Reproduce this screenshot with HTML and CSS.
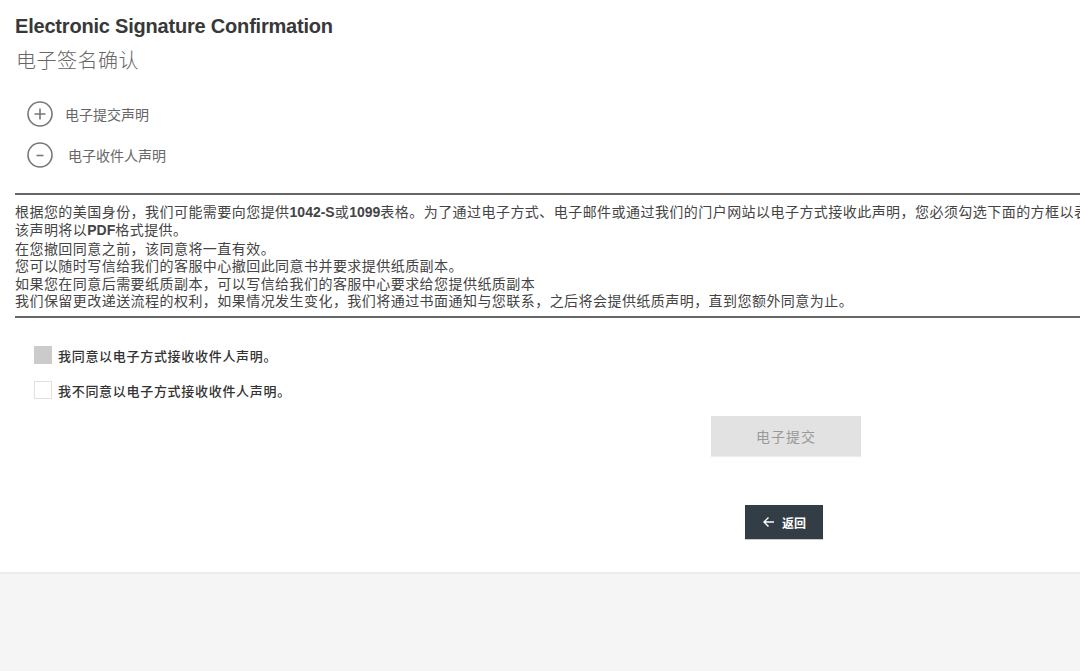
FILE: index.html
```html
<!DOCTYPE html>
<html lang="zh-CN">
<head>
  <meta charset="UTF-8" />
  <meta name="viewport" content="width=device-width, initial-scale=1.0" />
  <title>Electronic Signature Confirmation</title>
  <link rel="stylesheet" href="styles.css">
</head>
<body>
  <main class="page">
    <h1 class="title">Electronic Signature Confirmation</h1>
    <h2 class="subtitle">电子签名确认</h2>

    <div class="statements">
      <div class="statement">
        <span class="toggle">
          <svg width="26" height="26" viewBox="0 0 26 26">
            <circle cx="13" cy="13" r="12" fill="none" stroke="#777" stroke-width="1.6" />
            <path d="M13 7.5v11M7.5 13h11" stroke="#777" stroke-width="1.6" />
          </svg>
        </span>
        <span class="statement-label">电子提交声明</span>
      </div>
      <div class="statement">
        <span class="toggle">
          <svg width="26" height="26" viewBox="0 0 26 26">
            <circle cx="13" cy="13" r="12" fill="none" stroke="#777" stroke-width="1.6" />
            <path d="M9.5 13.5h7" stroke="#777" stroke-width="1.6" />
          </svg>
        </span>
        <span class="statement-label wide">电子收件人声明</span>
      </div>
    </div>

    <div class="notice">
      <p>根据您的美国身份，我们可能需要向您提供<b>1042-S</b>或<b>1099</b>表格。为了通过电子方式、电子邮件或通过我们的门户网站以电子方式接收此声明，您必须勾选下面的方框以表示同意。</p>
      <p>该声明将以<b>PDF</b>格式提供。</p>
      <p>在您撤回同意之前，该同意将一直有效。</p>
      <p>您可以随时写信给我们的客服中心撤回此同意书并要求提供纸质副本。</p>
      <p>如果您在同意后需要纸质副本，可以写信给我们的客服中心要求给您提供纸质副本</p>
      <p>我们保留更改递送流程的权利，如果情况发生变化，我们将通过书面通知与您联系，之后将会提供纸质声明，直到您额外同意为止。</p>
    </div>

    <div class="choices">
      <label class="choice">
        <span class="box box-filled"></span>
        <span>我同意以电子方式接收收件人声明。</span>
      </label>
      <label class="choice">
        <span class="box"></span>
        <span>我不同意以电子方式接收收件人声明。</span>
      </label>
    </div>

    <div class="actions">
      <button class="submit-button" disabled>电子提交</button>
      <button class="back-button">
        <svg width="13" height="12" viewBox="0 0 13 12">
          <path d="M12 6H2M6.5 1.5L2 6l4.5 4.5" fill="none" stroke="#fff" stroke-width="1.4" />
        </svg>
        返回
      </button>
    </div>
  </main>
  <footer class="footer"></footer>
</body>
</html>
```

FILE: styles.css
```css
html, body {
  margin: 0;
  padding: 0;
  height: 100%;
}
body {
  font-family: "Liberation Sans", "Noto Sans CJK SC", sans-serif;
  background: #fff;
  color: #444;
  overflow: hidden;
  display: flex;
  flex-direction: column;
}
.page {
  padding: 14px 0 32px 15px;
}
.title {
  margin: 0;
  font-size: 20px;
  line-height: 24px;
  font-weight: bold;
  color: #383838;
  letter-spacing: -0.2px;
}
.subtitle {
  margin: 8px 0 0 1px;
  font-family: "Noto Sans CJK SC", sans-serif;
  font-size: 20px;
  line-height: 28px;
  font-weight: 300;
  color: #666;
  letter-spacing: 0.5px;
}
.statements {
  margin-top: 26px;
  display: flex;
  flex-direction: column;
  gap: 13px;
}
.statement {
  display: flex;
  align-items: center;
  height: 28px;
  padding-left: 12px;
}
.toggle {
  display: flex;
  width: 26px;
  height: 26px;
}
.statement-label {
  margin-left: 12px;
  font-family: "Noto Sans CJK SC", sans-serif;
  font-size: 14px;
  color: #666;
}
.statement-label.wide {
  margin-left: 15px;
}
.notice {
  margin-top: 24px;
  width: 1400px;
  border-top: 2px solid #666;
  border-bottom: 2px solid #666;
  padding: 8px 0 7px;
}
.notice p {
  margin: 0;
  white-space: nowrap;
  font-family: "Noto Sans CJK SC", sans-serif;
  font-size: 14px;
  line-height: 17.4px;
  letter-spacing: 0.45px;
  color: #444;
}
.notice b {
  font-family: "Liberation Sans", sans-serif;
  font-weight: bold;
  letter-spacing: 0;
}
.choices {
  margin-top: 28px;
  padding-left: 19px;
  display: flex;
  flex-direction: column;
  gap: 17px;
}
.choice {
  display: flex;
  align-items: center;
  gap: 6px;
  height: 18px;
  font-family: "Noto Sans CJK SC", sans-serif;
  font-size: 13px;
  font-weight: 500;
  letter-spacing: 0.7px;
  color: #333;
}
.box {
  width: 16px;
  height: 16px;
  border: 1px solid #e0e0e0;
  background: #fff;
}
.box-filled {
  background: #cbcbcb;
  border-color: #cbcbcb;
}
.actions {
  margin: 17px 0 0 696px;
  display: flex;
  flex-direction: column;
  align-items: flex-start;
}
.submit-button {
  width: 150px;
  height: 41px;
  border: none;
  border-bottom: 1px solid #ececec;
  background: #e2e2e2;
  color: #999;
  font-family: "Noto Sans CJK SC", sans-serif;
  font-size: 14px;
  letter-spacing: 1px;
}
.back-button {
  margin: 48px 0 0 34px;
  width: 78px;
  height: 35px;
  display: flex;
  align-items: center;
  justify-content: center;
  gap: 7px;
  border: none;
  border-bottom: 1px solid #c7ccd0;
  background: #333d45;
  color: #fff;
  font-family: "Noto Sans CJK SC", sans-serif;
  font-size: 12px;
  font-weight: bold;
  cursor: pointer;
}
.footer {
  flex: 1;
  background: #f5f5f5;
  border-top: 2px solid #ebebeb;
}
```
